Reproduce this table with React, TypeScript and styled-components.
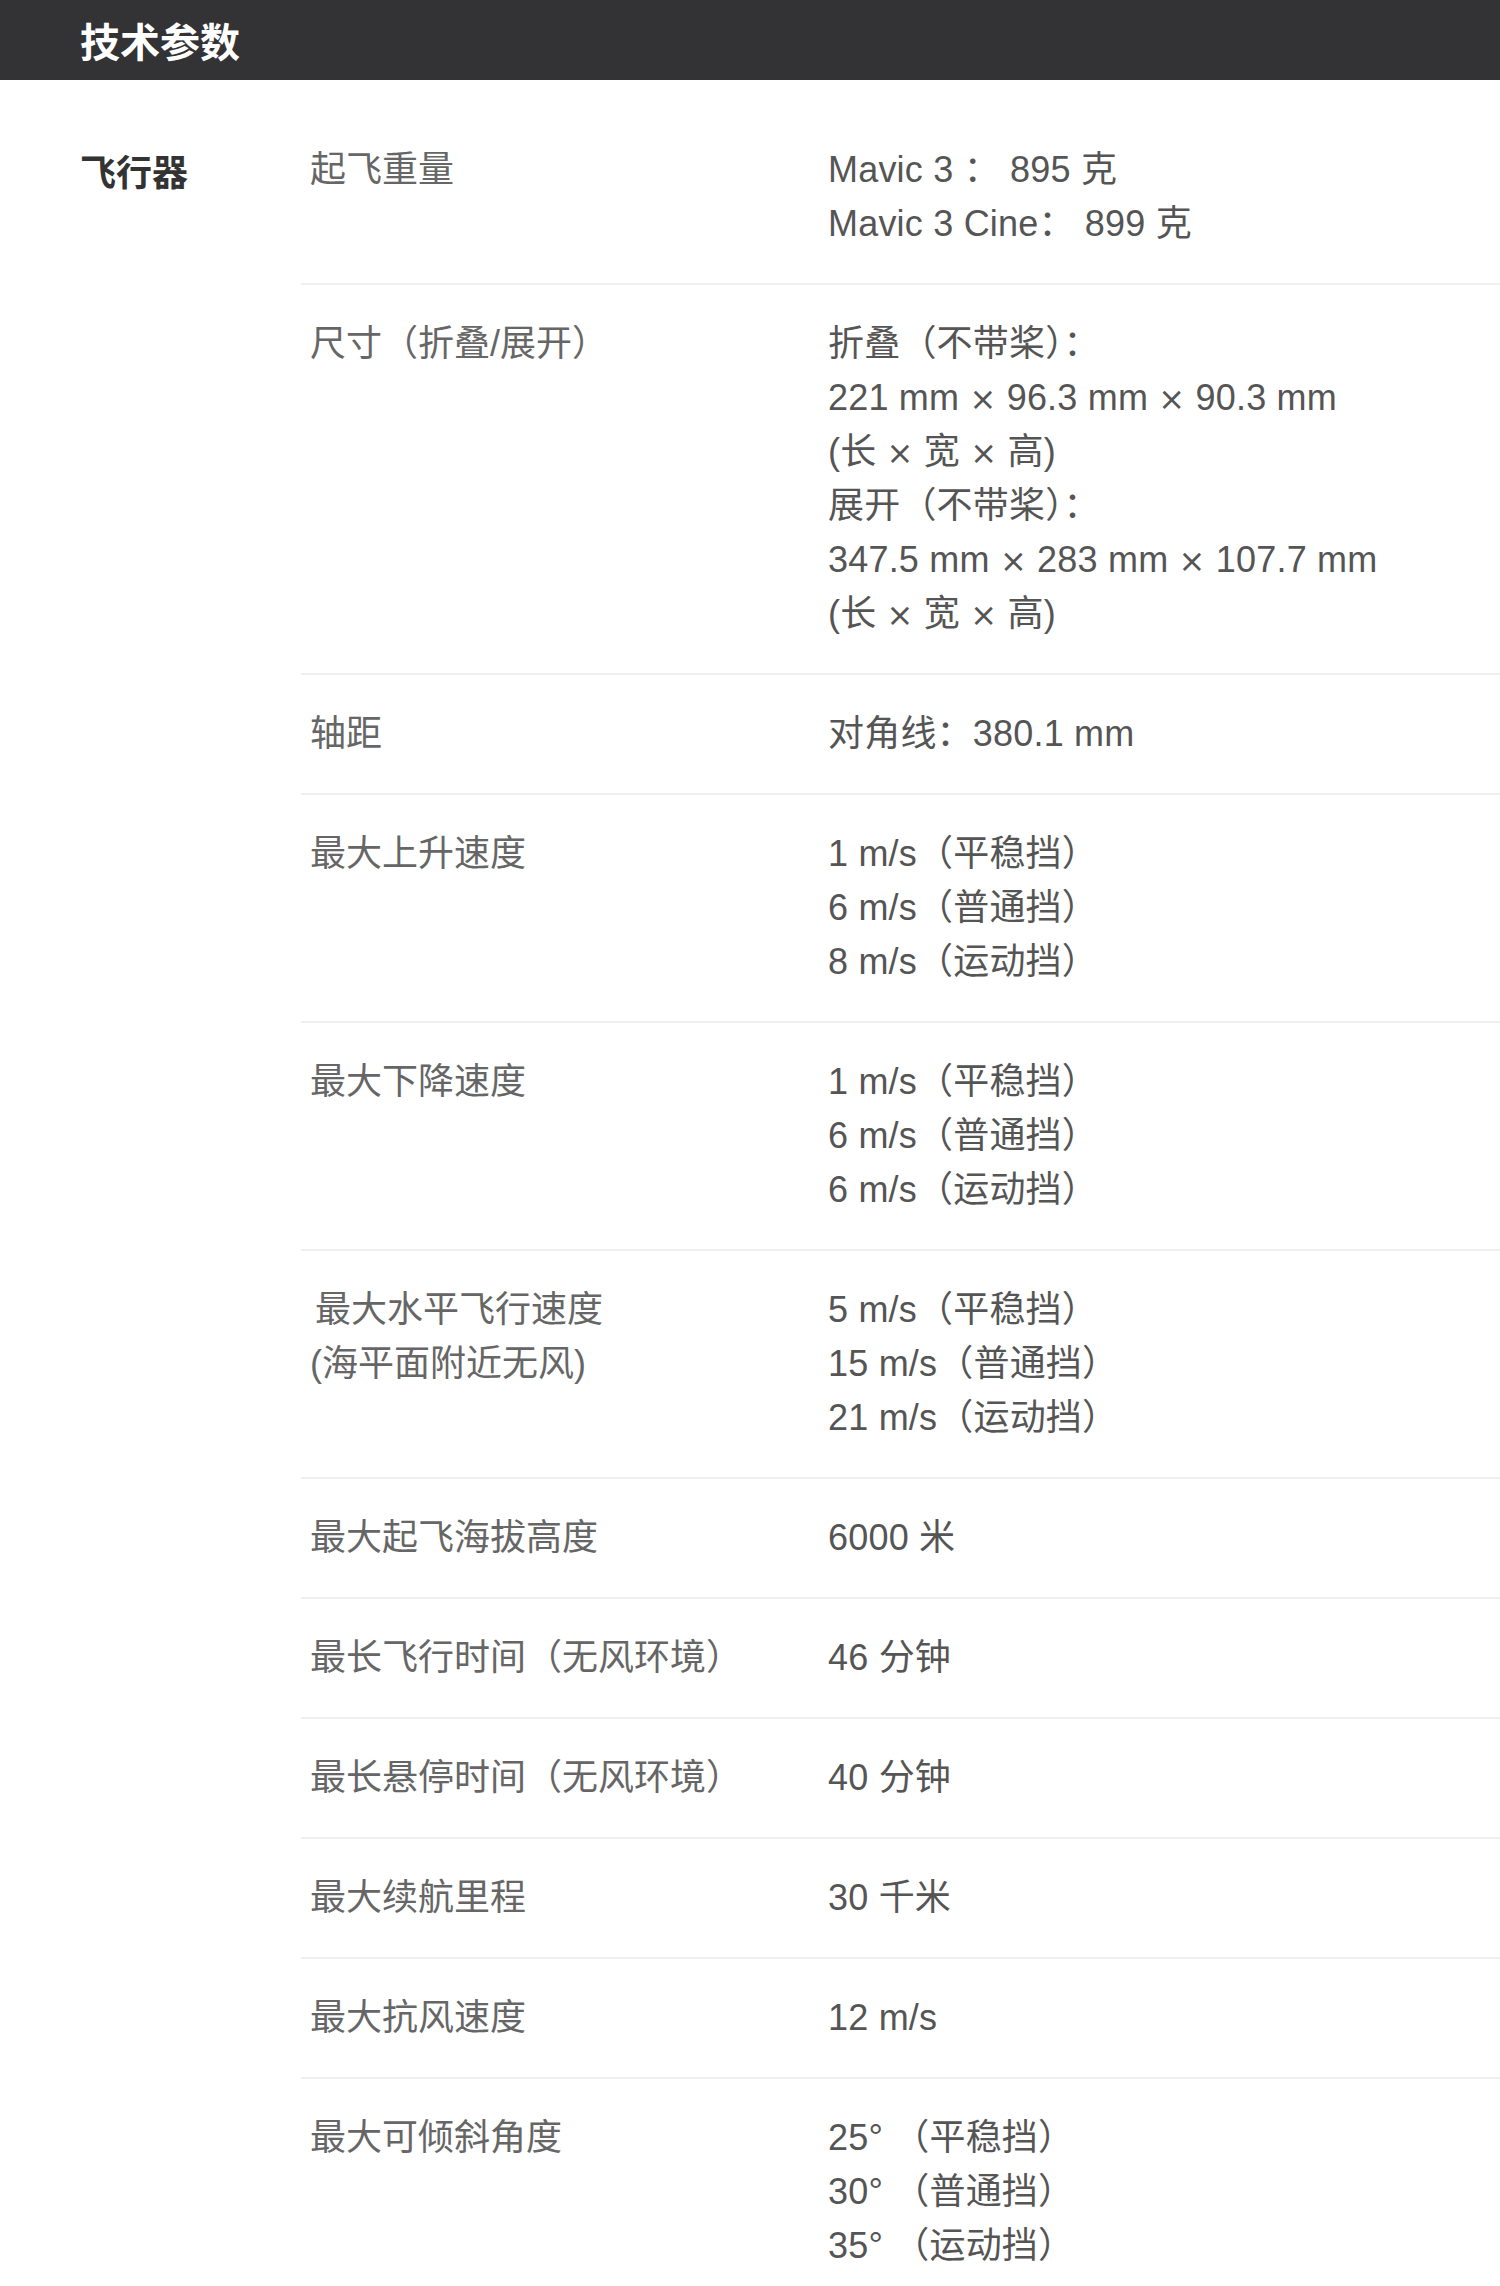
import styled, { createGlobalStyle } from 'styled-components';

interface SpecRow {
 label: string[];
 values: string[];
 indent?: boolean;
}

const specs: SpecRow[] = [
 { label: ['起飞重量'], values: ['Mavic 3 ： 895 克', 'Mavic 3 Cine： 899 克'] },
 {
  label: ['尺寸（折叠/展开）'],
  values: [
   '折叠（不带桨）：',
   '221 mm × 96.3 mm × 90.3 mm',
   '(长 × 宽 × 高)',
   '展开（不带桨）：',
   '347.5 mm × 283 mm × 107.7 mm',
   '(长 × 宽 × 高)',
  ],
 },
 { label: ['轴距'], values: ['对角线：380.1 mm'] },
 { label: ['最大上升速度'], values: ['1 m/s（平稳挡）', '6 m/s（普通挡）', '8 m/s（运动挡）'] },
 { label: ['最大下降速度'], values: ['1 m/s（平稳挡）', '6 m/s（普通挡）', '6 m/s（运动挡）'] },
 {
  label: ['最大水平飞行速度', '(海平面附近无风)'],
  values: ['5 m/s（平稳挡）', '15 m/s（普通挡）', '21 m/s（运动挡）'],
  indent: true,
 },
 { label: ['最大起飞海拔高度'], values: ['6000 米'] },
 { label: ['最长飞行时间（无风环境）'], values: ['46 分钟'] },
 { label: ['最长悬停时间（无风环境）'], values: ['40 分钟'] },
 { label: ['最大续航里程'], values: ['30 千米'] },
 { label: ['最大抗风速度'], values: ['12 m/s'] },
 { label: ['最大可倾斜角度'], values: ['25° （平稳挡）', '30° （普通挡）', '35° （运动挡）'] },
];

// draw the × sign in a wider font
const renderValue = (text: string) => {
 const parts = text.split('×');
 return parts.map((part, i) => (
  <span key={i}>
   {part}
   {i < parts.length - 1 && <Times>×</Times>}
  </span>
 ));
};

export default function App() {
 return (
  <>
   <GlobalStyle />
   <Page>
    <Header>
     <Title>技术参数</Title>
    </Header>

    <Section>
     <Category>飞行器</Category>
     <Rows>
      {specs.map((spec, i) => (
       <Row key={i}>
        <Label>
         {spec.label.map((line, j) => (
          <Line key={j} $indent={spec.indent && j === 0}>
           {line}
          </Line>
         ))}
        </Label>
        <Value>
         {spec.values.map((line, j) => (
          <Line key={j}>{renderValue(line)}</Line>
         ))}
        </Value>
       </Row>
      ))}
     </Rows>
    </Section>
   </Page>
  </>
 );
}

const GlobalStyle = createGlobalStyle`
 html, body {
  margin: 0;
  padding: 0;
  background: #fff;
 }
 body {
  font-family: 'Liberation Sans', 'Noto Sans CJK SC', sans-serif;
 }
`;

const Page = styled.div`
 width: 1500px;
 min-height: 2286px;
 background: #fff;
`;

const Header = styled.header`
 height: 80px;
 display: flex;
 align-items: center;
 padding-left: 80px;
 background-color: #333335;
`;

const Title = styled.h1`
 margin: 0;
 font-family: 'Noto Sans CJK SC', sans-serif;
 font-size: 40px;
 font-weight: 700;
 color: #fff;
 line-height: 1;
`;

const Section = styled.section`
 display: flex;
 padding-top: 31px;
 padding-left: 80px;
`;

const Category = styled.h2`
 width: 221px;
 flex-shrink: 0;
 margin: 0;
 padding-top: 32px;
 font-family: 'Noto Sans CJK SC', sans-serif;
 font-size: 36px;
 font-weight: 700;
 line-height: 54px;
 color: #333;
`;

const Rows = styled.div`
 flex: 1;
`;

const Row = styled.div`
 display: flex;
 padding: 32px 0 32px 9px;
 border-bottom: 2px solid #efefef;
 font-size: 36px;
 line-height: 54px;
`;

const Label = styled.div`
 width: 518px;
 flex-shrink: 0;
 color: #666;
`;

const Value = styled.div`
 flex: 1;
 color: #555;
 letter-spacing: 0.2px;
`;

const Line = styled.div<{ $indent?: boolean }>`
 height: 54px;
 white-space: nowrap;
 padding-left: ${(p) => (p.$indent ? '5px' : '0')};
`;

const Times = styled.span`
 font-family: 'DejaVu Sans', sans-serif;
 font-size: 32px;
 line-height: 0;
`;
